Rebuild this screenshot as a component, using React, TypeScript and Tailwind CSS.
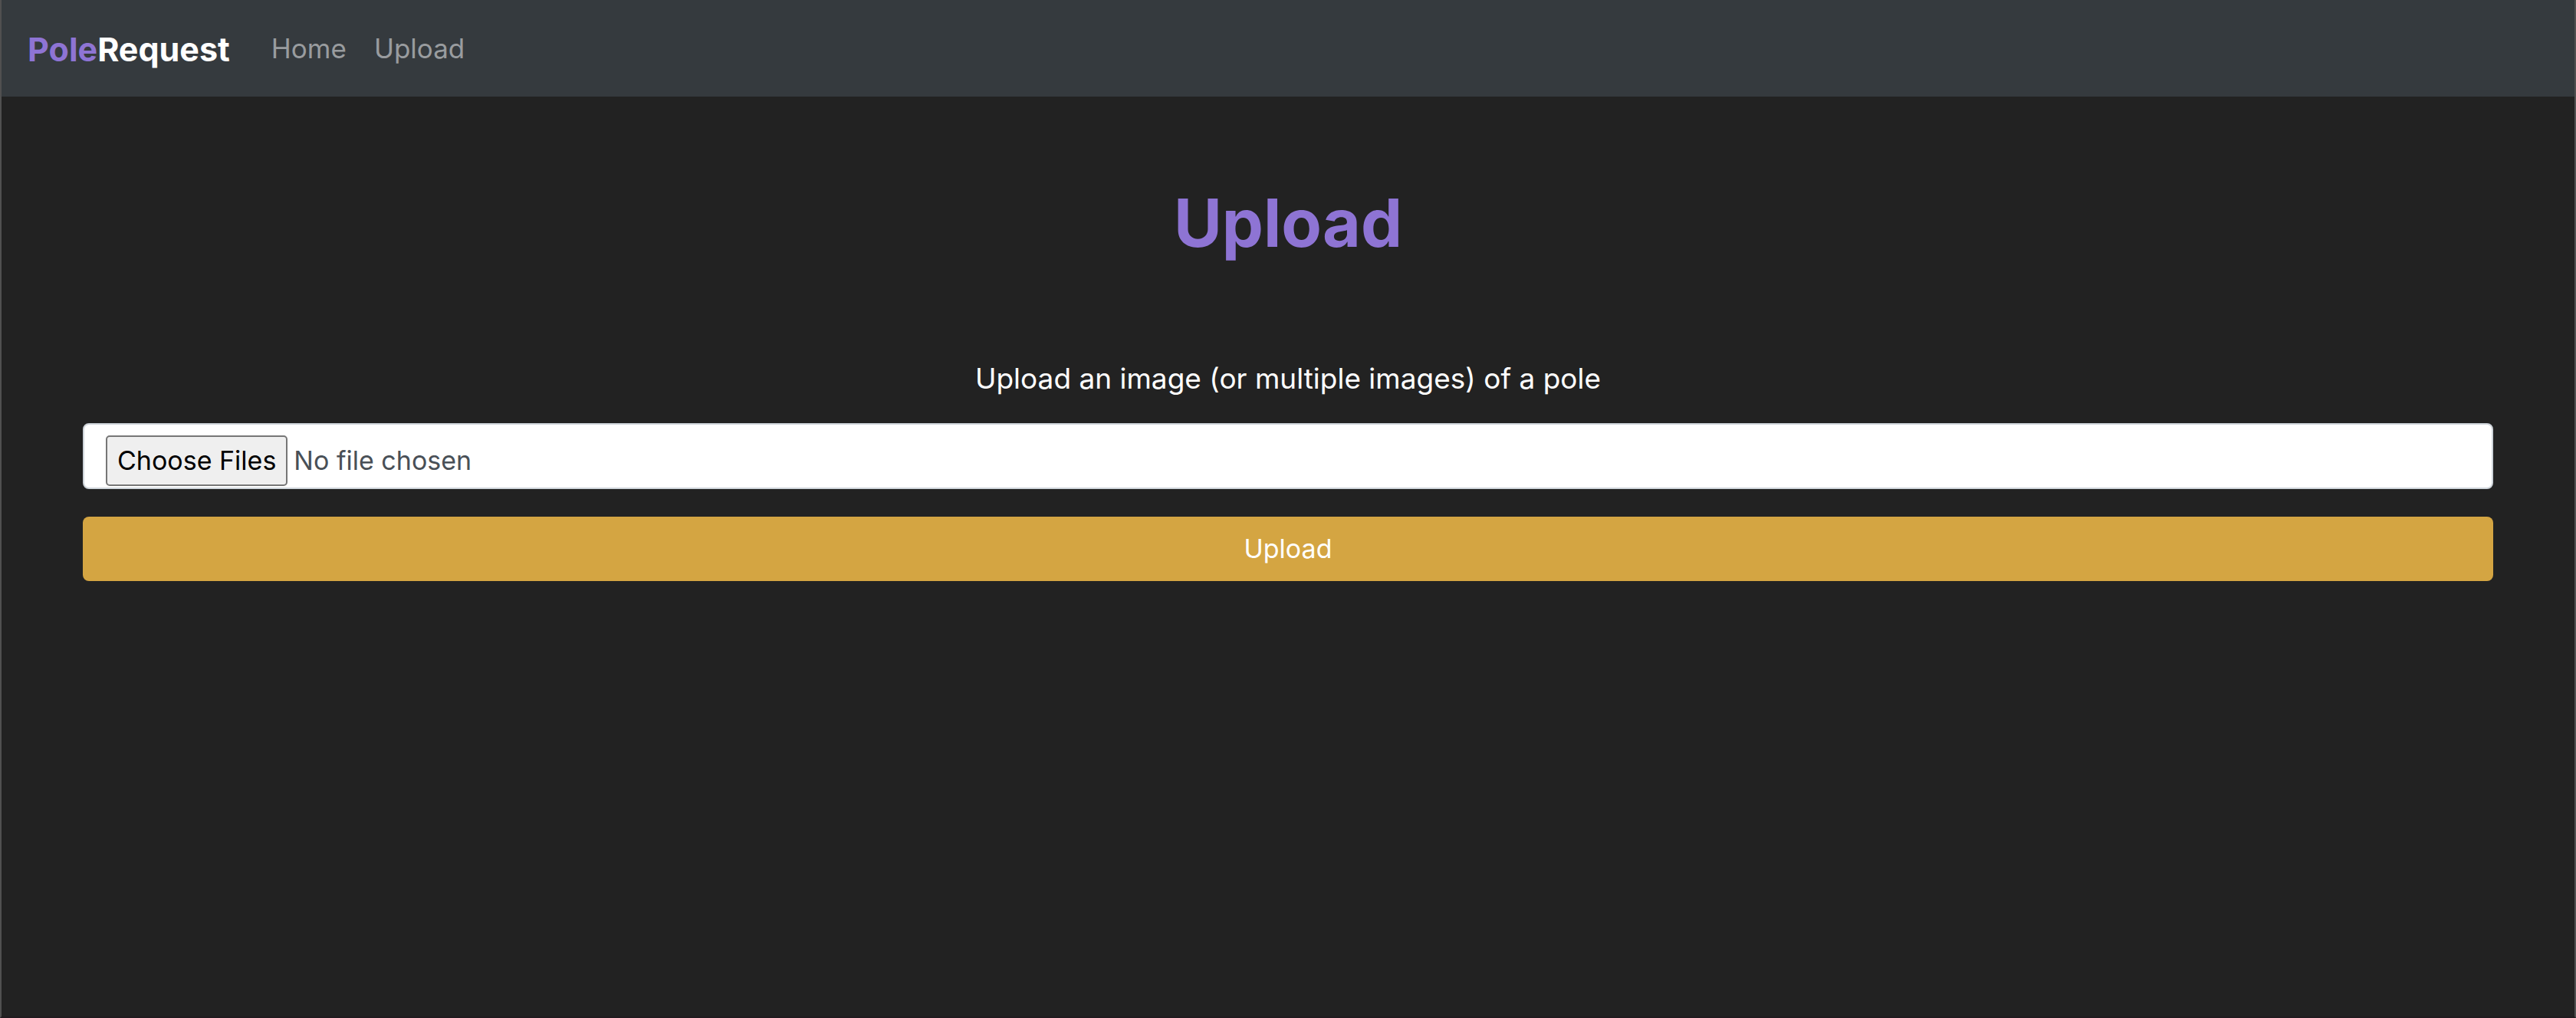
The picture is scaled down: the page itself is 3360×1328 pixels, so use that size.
const links = ["Home", "Upload"];

export default function App() {
  return (
    <div className="min-h-screen border-x-2 border-b-2 border-x-[#505050] border-b-[#211b1f] bg-[#222222] font-['Inter','Liberation_Sans',sans-serif] text-white">
      <nav className="flex h-[126px] items-center bg-[#353a3e] px-[34px]">
        <a href="#home" className="mr-[54px] pt-0.5 text-[43px] leading-[60px] font-bold">
          <span className="text-[#8e74d4]">Pole</span>Request
        </a>
        <ul className="flex gap-9 text-[35px] leading-[54px] text-[#999c9f]">
          {links.map((label) => (
            <li key={label}>
              <a href={"#" + label.toLowerCase()}>{label}</a>
            </li>
          ))}
        </ul>
      </nav>

      <main className="px-[106px] pt-28 text-center">
        <h1 className="text-[86px] leading-[106px] font-bold text-[#8e74d4]">Upload</h1>
        <form className="flex flex-col" onSubmit={(event) => event.preventDefault()}>
          <label htmlFor="images" className="mt-[120px] text-[37px] leading-[60px]">
            Upload an image (or multiple images) of a pole
          </label>
          <input
            id="images"
            type="file"
            multiple
            className="mt-7 h-[86px] w-full overflow-hidden rounded-lg border-2 border-[#ced4da] bg-white px-7 pt-[14px] text-left text-[34px] leading-[54px] text-[#495057] file:mr-2 file:h-[66px] file:rounded-[5px] file:border-2 file:border-solid file:border-[#767676] file:bg-[#efefef] file:px-[13px] file:text-black"
          />
          <button type="submit" className="mt-9 h-[84px] w-full rounded-lg bg-[#d4a542] text-[34px] leading-[54px]">
            Upload
          </button>
        </form>
      </main>
    </div>
  );
}
